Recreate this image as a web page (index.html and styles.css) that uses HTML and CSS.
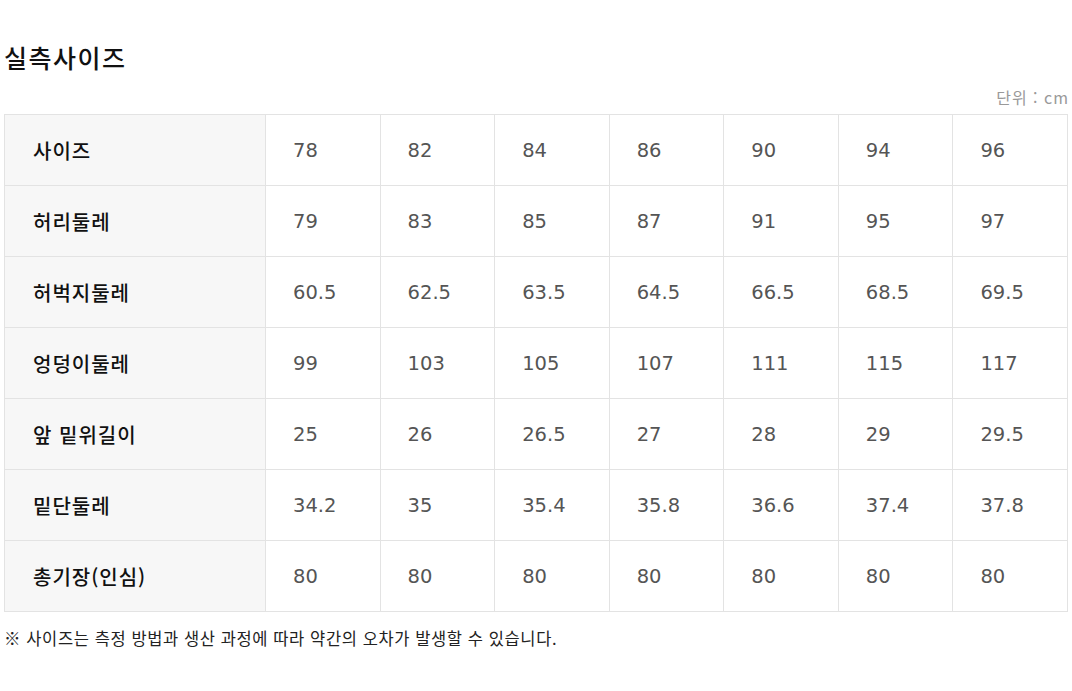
FILE: index.html
```html
<!DOCTYPE html>
<html lang="ko">
<head>
<meta charset="utf-8">
<link rel="stylesheet" href="styles.css">
</head>
<body>
<div class="wrap">
  <h2 class="title">실측사이즈</h2>
  <div class="unit">단위 : cm</div>
  <table class="size-table">
    <colgroup><col class="c-head"><col><col><col><col><col><col><col></colgroup>
    <tr><th>사이즈</th><td>78</td><td>82</td><td>84</td><td>86</td><td>90</td><td>94</td><td>96</td></tr>
    <tr><th>허리둘레</th><td>79</td><td>83</td><td>85</td><td>87</td><td>91</td><td>95</td><td>97</td></tr>
    <tr><th>허벅지둘레</th><td>60.5</td><td>62.5</td><td>63.5</td><td>64.5</td><td>66.5</td><td>68.5</td><td>69.5</td></tr>
    <tr><th>엉덩이둘레</th><td>99</td><td>103</td><td>105</td><td>107</td><td>111</td><td>115</td><td>117</td></tr>
    <tr><th>앞 밑위길이</th><td>25</td><td>26</td><td>26.5</td><td>27</td><td>28</td><td>29</td><td>29.5</td></tr>
    <tr><th>밑단둘레</th><td>34.2</td><td>35</td><td>35.4</td><td>35.8</td><td>36.6</td><td>37.4</td><td>37.8</td></tr>
    <tr><th>총기장(인심)</th><td>80</td><td>80</td><td>80</td><td>80</td><td>80</td><td>80</td><td>80</td></tr>
  </table>
  <p class="note">※ 사이즈는 측정 방법과 생산 과정에 따라 약간의 오차가 발생할 수 있습니다.</p>
</div>
</body>
</html>
```
FILE: styles.css
```css
html, body {
  margin: 0;
  padding: 0;
  background: #fff;
}
body {
  font-family: "Noto Sans CJK KR", "Noto Sans", sans-serif;
  color: #111;
}
.wrap {
  padding: 0 4px;
}
.title {
  margin: 0;
  padding-top: 40px;
  height: 34px;
  line-height: 34px;
  font-size: 25px;
  font-weight: 500;
  color: #111;
  letter-spacing: 1.5px;
}
.unit {
  margin-top: 12px;
  height: 28px;
  line-height: 22px;
  text-align: right;
  font-size: 16px;
  color: #999;
  letter-spacing: 1px;
  margin-right: -1px;
}
.size-table {
  width: 100%;
  border-collapse: collapse;
  table-layout: fixed;
}
.c-head {
  width: 261px;
}
.size-table th,
.size-table td {
  height: 70px;
  border: 1px solid #e3e3e3;
  padding: 0 0 0 27px;
  text-align: left;
  font-size: 20px;
}
.size-table th {
  background: #f7f7f7;
  color: #111;
  font-weight: 500;
  padding-left: 28px;
  letter-spacing: 1px;
}
.size-table td {
  font-family: "DejaVu Sans", "Noto Sans CJK KR", sans-serif;
  font-size: 19.5px;
  color: #555;
  font-weight: 400;
}
.note {
  margin: 15px 0 0;
  font-size: 16.5px;
  color: #222;
  line-height: 22px;
  letter-spacing: 0.6px;
}
```
